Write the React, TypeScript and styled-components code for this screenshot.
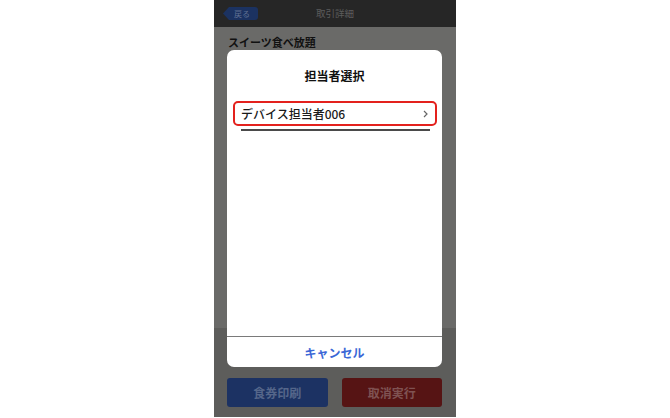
import { FC } from "react";
import styled, { createGlobalStyle } from "styled-components";

const GlobalStyle = createGlobalStyle`
  html, body {
    margin: 0;
    padding: 0;
    background: #ffffff;
    font-family: "Noto Sans CJK JP", "Noto Sans", sans-serif;
  }
`;

const Phone = styled("div")`
  position: relative;
  width: 242px;
  height: 417px;
  margin: 0 auto;
  display: flex;
  flex-direction: column;
  background: #6a6a68;
  overflow: hidden;
`;

const Header = styled("div")`
  height: 27px;
  background: #262626;
  display: grid;
  grid-template-columns: 1fr auto 1fr;
  align-items: center;
  padding: 0 9px;
`;

const BackButton = styled("div")`
  justify-self: start;
  width: 35px;
  height: 13px;
  background: #1b3261;
  clip-path: polygon(6px 0, 100% 0, 100% 100%, 6px 100%, 0 50%);
  border-radius: 0 3px 3px 0;
  display: flex;
  align-items: center;
  justify-content: center;
  padding-left: 3px;
  box-sizing: border-box;
  font-size: 8px;
  color: #5f6f92;
  line-height: 1;
`;

const HeaderTitle = styled("div")`
  font-size: 9.5px;
  color: #5c5c5c;
  line-height: 1;
`;

const Content = styled("div")`
  flex: 1;
  padding: 10px 14px;
`;

const ItemName = styled("div")`
  font-size: 11px;
  font-weight: 700;
  color: #111111;
  line-height: 1;
`;

const Footer = styled("div")`
  height: 89px;
  background: #5d5d5b;
  box-sizing: border-box;
  padding: 50px 14px 0 13px;
  display: flex;
  gap: 14px;
`;

const FooterButton = styled("div")<{ $bg: string; $fg: string }>`
  flex: 1;
  height: 29px;
  border-radius: 3px;
  background: ${({ $bg }) => $bg};
  color: ${({ $fg }) => $fg};
  font-size: 12px;
  font-weight: 700;
  display: flex;
  align-items: center;
  justify-content: center;
`;

const Modal = styled("div")`
  position: absolute;
  left: 13px;
  top: 50px;
  width: 215px;
  height: 317px;
  background: #ffffff;
  border-radius: 7px;
  display: flex;
  flex-direction: column;
  overflow: hidden;
`;

const ModalTitle = styled("div")`
  padding-top: 18px;
  height: 33px;
  box-sizing: border-box;
  text-align: center;
  font-size: 12px;
  font-weight: 700;
  color: #111111;
  line-height: 15px;
`;

const ListItem = styled("div")`
  margin: 18px 5px 0 6px;
  height: 25px;
  box-sizing: border-box;
  border: 2px solid #e3211d;
  border-radius: 5px;
  display: flex;
  align-items: center;
  justify-content: space-between;
  padding: 0 7px 0 6px;
  font-size: 12px;
  font-weight: 500;
  color: #1a1a1a;
`;

const Underline = styled("div")`
  margin: 3px 12px 0 14px;
  height: 2px;
  background: #4a4a4a;
`;

const Spacer = styled("div")`
  flex: 1;
`;

const CancelButton = styled("div")`
  height: 30px;
  border-top: 1px solid #7a7a7a;
  display: flex;
  align-items: center;
  justify-content: center;
  font-size: 12px;
  font-weight: 700;
  color: #3b67d6;
`;

const Chevron: FC = () => (
  <svg width="5" height="8" viewBox="0 0 5 8">
    <path d="M1 1 L4 4 L1 7" fill="none" stroke="#666666" strokeWidth="1.2" />
  </svg>
);

const App: FC = () => {
  return (
    <>
      <GlobalStyle />
      <Phone>
        <Header>
          <BackButton>戻る</BackButton>
          <HeaderTitle>取引詳細</HeaderTitle>
          <div />
        </Header>
        <Content>
          <ItemName>スイーツ食べ放題</ItemName>
        </Content>
        <Footer>
          <FooterButton $bg="#1c3263" $fg="#55668a">食券印刷</FooterButton>
          <FooterButton $bg="#561414" $fg="#7f5252">取消実行</FooterButton>
        </Footer>
        <Modal>
          <ModalTitle>担当者選択</ModalTitle>
          <ListItem>
            <span>デバイス担当者006</span>
            <Chevron />
          </ListItem>
          <Underline />
          <Spacer />
          <CancelButton>キャンセル</CancelButton>
        </Modal>
      </Phone>
    </>
  );
};

export default App;
